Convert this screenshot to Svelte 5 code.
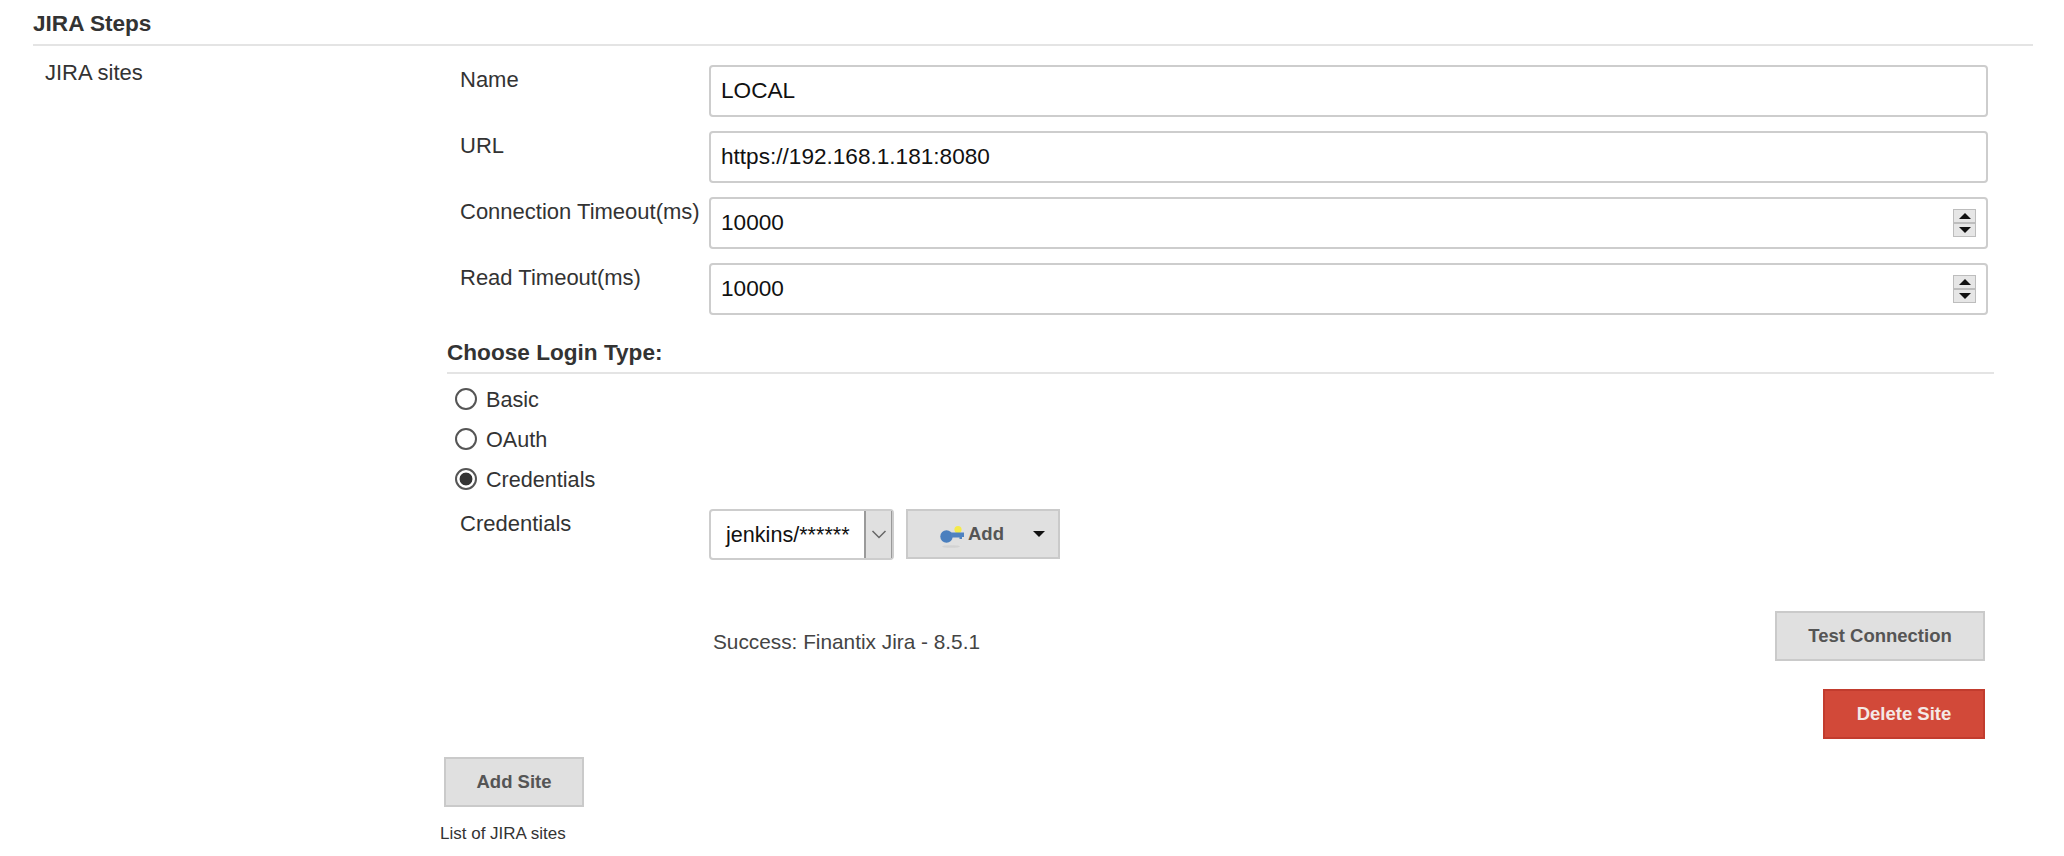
<script>
    const fields = [
        { label: "Name", value: "LOCAL", spinner: false },
        { label: "URL", value: "https://192.168.1.181:8080", spinner: false },
        { label: "Connection Timeout(ms)", value: "10000", spinner: true },
        { label: "Read Timeout(ms)", value: "10000", spinner: true },
    ];

    const loginTypes = ["Basic", "OAuth", "Credentials"];
    let loginType = "Credentials";
</script>

<div class="page">
    <h2 class="section-title">JIRA Steps</h2>

    <div class="site-row">
        <div class="row-label">JIRA sites</div>

        <div class="form">
            <div class="fields">
                {#each fields as field}
                    <div class="field">
                        <span class="field-label">{field.label}</span>
                        <div class="input-wrap">
                            <input type="text" value={field.value} />
                            {#if field.spinner}
                                <div class="spinner">
                                    <span class="spin-btn"><i class="tri up"></i></span>
                                    <span class="spin-btn"><i class="tri down"></i></span>
                                </div>
                            {/if}
                        </div>
                    </div>
                {/each}
            </div>

            <h3 class="login-title">Choose Login Type:</h3>

            <div class="radios">
                {#each loginTypes as type}
                    <label class="radio">
                        <input type="radio" bind:group={loginType} value={type} />
                        {type}
                    </label>
                {/each}
            </div>

            <div class="cred-row">
                <span class="field-label">Credentials</span>
                <div class="select">
                    <span class="select-value">jenkins/******</span>
                    <span class="select-arrow">
                        <svg width="16" height="9" viewBox="0 0 16 9">
                            <path d="M1.5 1 L8 7.5 L14.5 1" fill="none" stroke="#666" stroke-width="1.5" />
                        </svg>
                    </span>
                </div>
                <button class="btn add-btn">
                    <svg class="key" width="24" height="22" viewBox="0 0 24 22">
                        <ellipse cx="11" cy="20.5" rx="9" ry="1.3" fill="#d2d2d2" />
                        <circle cx="18" cy="3.6" r="3.6" fill="#f5ea4a" />
                        <circle cx="6.5" cy="10.5" r="6.2" fill="#4a7fbe" />
                        <path d="M11 6.5 H24 V11 H22 V13 H19.5 V11.5 H11 Z" fill="#4f82c0" />
                    </svg>
                    <span>Add</span>
                    <i class="caret"></i>
                </button>
            </div>

            <div class="status-row">
                <span class="status">Success: Finantix Jira - 8.5.1</span>
                <button class="btn test-btn">Test Connection</button>
            </div>

            <div class="delete-row">
                <button class="btn delete-btn">Delete Site</button>
            </div>

            <button class="btn add-site">Add Site</button>
            <div class="hint">List of JIRA sites</div>
        </div>
    </div>
</div>

<style>
    :global(body) {
        background: #fff;
    }
    .page {
        padding: 0 31px 0 33px;
        font-family: "Liberation Sans", Arial, sans-serif;
        color: #333;
    }
    .section-title {
        margin: 0;
        height: 44px;
        line-height: 48px;
        font-size: 22.6px;
        font-weight: bold;
        color: #333;
        border-bottom: 2px solid #e4e4e4;
    }
    .site-row {
        display: flex;
        padding-left: 12px;
    }
    .row-label {
        width: 395px;
        flex: none;
        padding-top: 12px;
        line-height: 30px;
        font-size: 22px;
    }
    .form {
        width: 1554px;
        padding-top: 19px;
    }
    .fields {
        display: flex;
        flex-direction: column;
        gap: 14px;
        padding: 0 6px 0 20px;
    }
    .field {
        display: flex;
    }
    .field-label {
        flex: none;
        width: 249px;
        line-height: 30px;
        font-size: 22px;
    }
    .input-wrap {
        position: relative;
        flex: 1;
    }
    input[type="text"] {
        display: block;
        box-sizing: border-box;
        width: 100%;
        height: 52px;
        padding: 0 10px;
        border: 2px solid #cdcdcd;
        border-radius: 4px;
        font-family: inherit;
        font-size: 22.6px;
        color: #111;
        outline: none;
    }
    .spinner {
        position: absolute;
        top: 12px;
        right: 12px;
        width: 23px;
        display: flex;
        flex-direction: column;
    }
    .spin-btn {
        box-sizing: border-box;
        height: 14px;
        display: flex;
        align-items: center;
        justify-content: center;
        background: #e6e6e6;
        border: 1px solid #bdbdbd;
    }
    .tri {
        width: 0;
        height: 0;
        border-left: 6px solid transparent;
        border-right: 6px solid transparent;
    }
    .tri.up {
        border-bottom: 6px solid #111;
    }
    .tri.down {
        border-top: 6px solid #111;
    }
    .login-title {
        margin: 23px 0 0 7px;
        padding-bottom: 4px;
        line-height: 30px;
        font-size: 22.6px;
        font-weight: bold;
        color: #333;
        border-bottom: 2px solid #e4e4e4;
    }
    .radios {
        margin-top: 5px;
        padding-left: 15px;
    }
    .radio {
        display: flex;
        align-items: center;
        height: 40px;
        padding-top: 1px;
        box-sizing: border-box;
        font-size: 21.6px;
    }
    .radio input {
        appearance: none;
        box-sizing: border-box;
        width: 22px;
        height: 22px;
        margin: -2px 9px 0 0;
        border: 2px solid #555;
        border-radius: 50%;
        background: #fff;
    }
    .radio input:checked {
        background: radial-gradient(circle, #333 0 6px, #fff 6.8px);
    }
    .cred-row {
        display: flex;
        margin: 10px 0 0 20px;
    }
    .select {
        box-sizing: border-box;
        flex: none;
        display: flex;
        width: 185px;
        height: 51px;
        border: 2px solid #cdcdcd;
        border-radius: 4px;
    }
    .select-value {
        flex: 1;
        padding-left: 15px;
        line-height: 47px;
        font-size: 21.6px;
        color: #111;
    }
    .select-arrow {
        width: 28px;
        flex: none;
        display: flex;
        align-items: center;
        justify-content: center;
        background: #e0e0e0;
        border-left: 2px solid #9a9a9a;
        border-right: 1px solid #9a9a9a;
        box-sizing: border-box;
    }
    .btn {
        box-sizing: border-box;
        height: 50px;
        padding: 0;
        border: 2px solid #cacaca;
        background: #e0e0e0;
        font-family: inherit;
        font-size: 18.5px;
        font-weight: bold;
        color: #555;
    }
    .add-btn {
        flex: none;
        position: relative;
        width: 154px;
        margin-left: 12px;
        display: flex;
        align-items: center;
        padding-left: 32px;
    }
    .key {
        margin: 6px 4px 0 0;
    }
    .caret {
        margin-left: 29px;
        width: 0;
        height: 0;
        border-left: 6px solid transparent;
        border-right: 6px solid transparent;
        border-top: 6px solid #111;
    }
    .status-row {
        display: flex;
        align-items: center;
        justify-content: space-between;
        margin: 51px 9px 0 23px;
        padding-left: 250px;
    }
    .status {
        padding-top: 12px;
        font-size: 20.8px;
        color: #444;
    }
    .test-btn {
        width: 210px;
    }
    .delete-row {
        display: flex;
        justify-content: flex-end;
        margin: 28px 9px 0 0;
    }
    .delete-btn {
        width: 162px;
        background: #d24939;
        border-color: #c23c2e;
        color: #f4e9e6;
    }
    .add-site {
        display: block;
        width: 140px;
        margin: 18px 0 0 4px;
    }
    .hint {
        margin-top: 16px;
        line-height: 22px;
        font-size: 17px;
        color: #333;
    }
</style>
